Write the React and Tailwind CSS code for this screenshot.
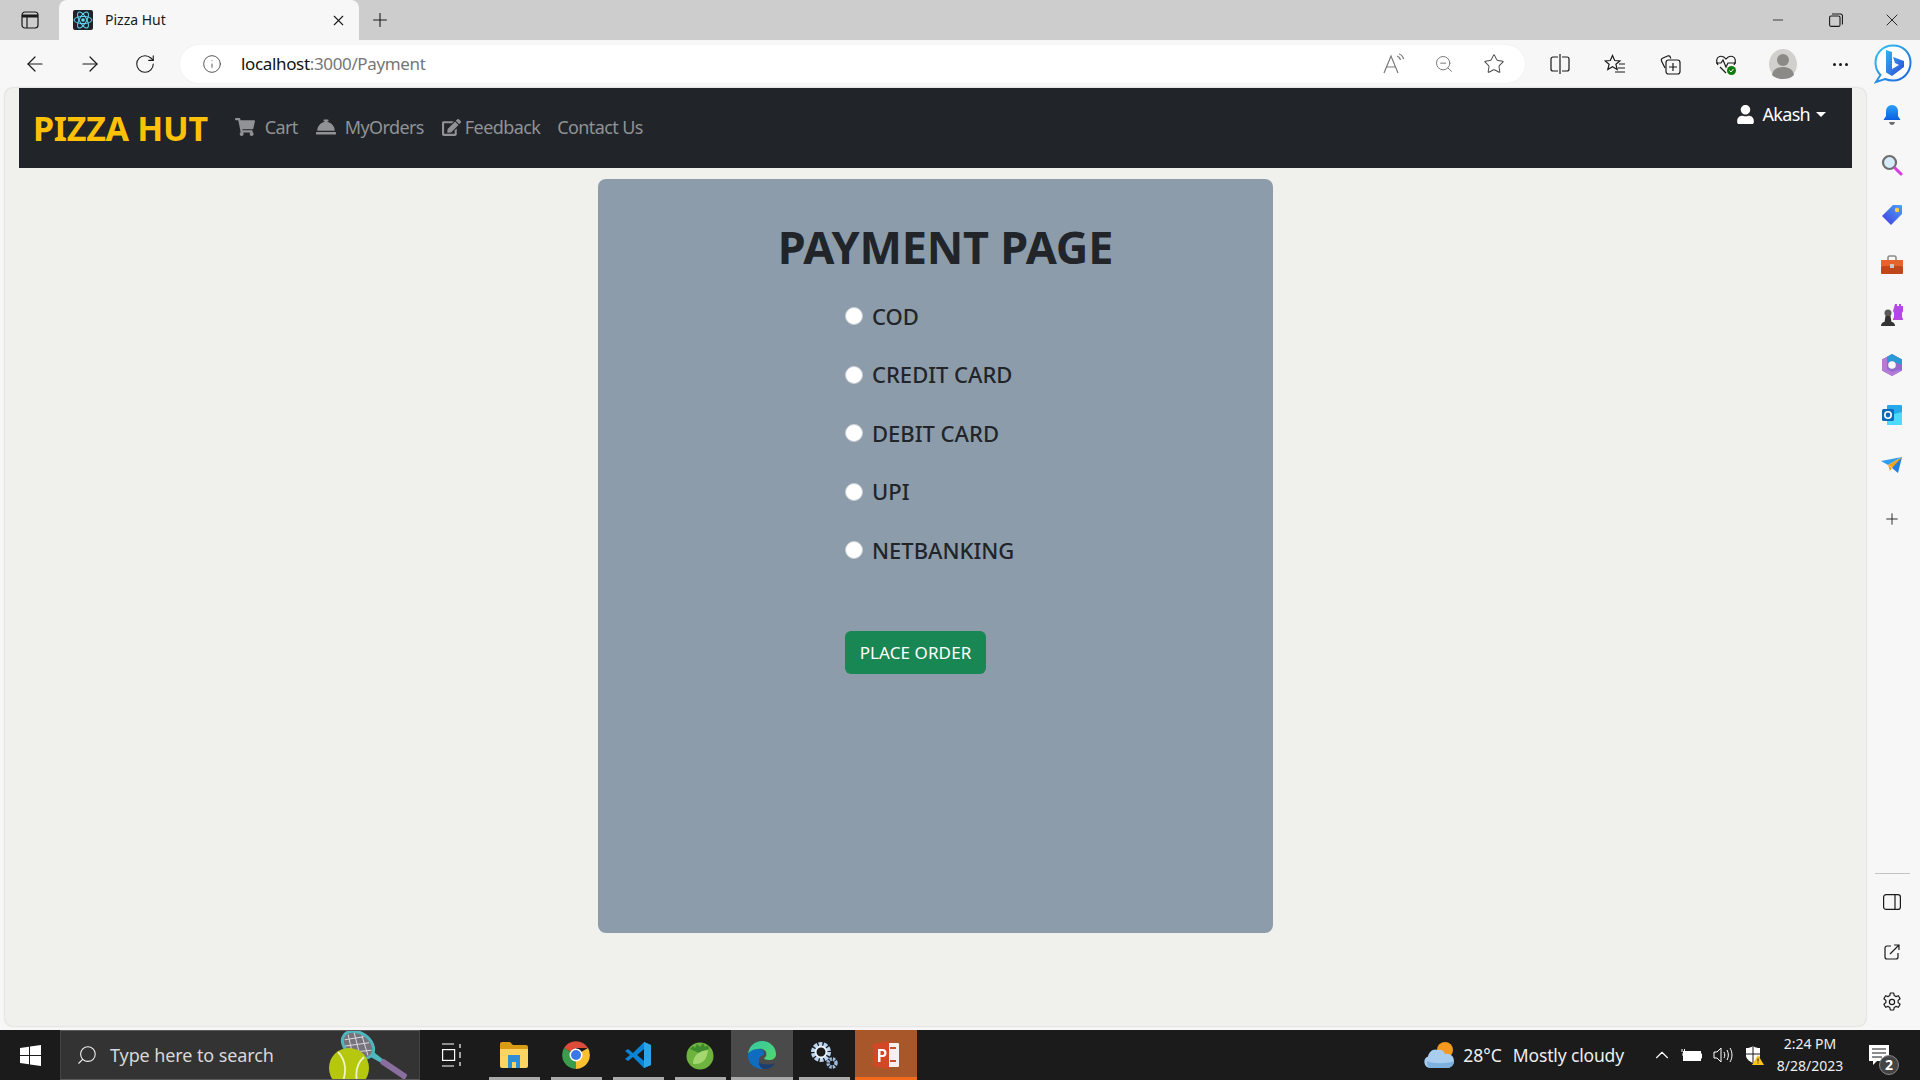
import { ArrowLeft, ArrowRight, RotateCw, Info, ZoomOut, Star, Plus, X, Minus, ChevronUp, Search } from "lucide-react";
import { FaShoppingCart, FaConciergeBell, FaEdit, FaUser } from "react-icons/fa";

const uiFont = { fontFamily: '"Noto Sans", "Open Sans", sans-serif' };

const ToolIcon = ({ width = "w-[45px]", children }) => (
  <div className={`${width} h-full flex items-center justify-center shrink-0`}>{children}</div>
);

const ReactFavicon = () => (
  <svg width="20" height="20" viewBox="0 0 20 20">
    <rect width="20" height="20" rx="2" fill="#20232a" />
    <g fill="none" stroke="#61dafb" strokeWidth="1">
      <ellipse cx="10" cy="10" rx="9" ry="3.6" />
      <ellipse cx="10" cy="10" rx="9" ry="3.6" transform="rotate(60 10 10)" />
      <ellipse cx="10" cy="10" rx="9" ry="3.6" transform="rotate(120 10 10)" />
    </g>
    <circle cx="10" cy="10" r="1.8" fill="#61dafb" />
  </svg>
);

const SideIcon = () => (
  <svg width="18" height="18" viewBox="0 0 18 18" fill="none" stroke="#1a1a1a" strokeWidth="1.2">
    <rect x="1" y="1" width="16" height="16" rx="3" />
    <path d="M1 5h16" strokeWidth="3" />
    <path d="M6 5v12" />
  </svg>
);

const ReadAloud = () => (
  <svg width="24" height="22" viewBox="0 0 24 22" fill="none" stroke="#7a7a7a" strokeWidth="1.2">
    <path d="M2 20 9 3l7 17M4.5 14h9" />
    <path d="M15 3c2 .6 3 2 3.4 4M17 1c2.6.7 4 2.6 4.6 5" />
  </svg>
);

const SplitScreen = () => (
  <svg width="20" height="22" viewBox="0 0 20 22" fill="none" stroke="#1a1a1a" strokeWidth="1.2">
    <path d="M8 4H3a2 2 0 0 0-2 2v10a2 2 0 0 0 2 2h5M12 4h5a2 2 0 0 1 2 2v10a2 2 0 0 1-2 2h-5M10 1v20" />
  </svg>
);

const Favorites = () => (
  <svg width="22" height="22" viewBox="0 0 22 22" fill="none" stroke="#1a1a1a" strokeWidth="1.2">
    <path d="m8.5 2.5 2.2 5 5.2.4-4 3.4 1.3 5.2-4.7-2.8-4.7 2.8 1.3-5.2-4-3.4 5.2-.4z" />
    <path d="M15 11h6M14 15h7M11 19h10" />
  </svg>
);

const Collections = () => (
  <svg width="22" height="22" viewBox="0 0 22 22" fill="none" stroke="#1a1a1a" strokeWidth="1.2">
    <path d="M6 15 2.5 8a2 2 0 0 1 1-2.7l5-2.3a2 2 0 0 1 2.7 1l.6 1.4" />
    <rect x="7" y="7" width="14" height="14" rx="2.5" />
    <path d="M14 10v8M10 14h8" />
  </svg>
);

const HealthHeart = () => (
  <svg width="22" height="24" viewBox="0 0 22 24" fill="none">
    <path d="M3 13C1 10 1 5.5 4.5 4.5 7 3.8 9.5 5 11 7c1.5-2 4-3.2 6.5-2.5C21 5.5 21 10 19 13" stroke="#1a1a1a" strokeWidth="1.2" />
    <path d="M1 11h5l2 -3 3 7 2-4h8M5 15l6 6" stroke="#1a1a1a" strokeWidth="1.2" />
    <circle cx="16.5" cy="18.5" r="4.5" fill="#107c10" />
    <path d="m14.5 18.5 1.5 1.5 2.5-3" stroke="#fff" strokeWidth="1" />
  </svg>
);

const Avatar = () => (
  <svg width="28" height="30" viewBox="0 0 28 30">
    <ellipse cx="14" cy="15" rx="14" ry="15" fill="#d2d0cc" />
    <circle cx="14" cy="11" r="6" fill="#8c8a86" />
    <path d="M3 26c1-6 6-8 11-8s10 2 11 8c-3 3-7 4-11 4s-8-1-11-4z" fill="#8c8a86" />
  </svg>
);

const BingButton = () => (
  <svg width="38" height="40" viewBox="0 0 38 40">
    <defs>
      <linearGradient id="bingRing" x1="0" y1="0" x2="1" y2="1">
        <stop offset="0" stopColor="#36c5f0" />
        <stop offset="1" stopColor="#1b5fe0" />
      </linearGradient>
      <linearGradient id="bingB" x1="0" y1="0" x2="1" y2="1">
        <stop offset="0" stopColor="#2fb4f0" />
        <stop offset="1" stopColor="#2f49d8" />
      </linearGradient>
    </defs>
    <path d="M19 1.5C9 1.5 1.5 9 1.5 18.5c0 5 2 9.5 5 12.5L2 38l9-3c2.5 1 5 1.5 8 1.5 10 0 17.5-8 17.5-18S29 1.5 19 1.5z" fill="#fff" stroke="url(#bingRing)" strokeWidth="2" />
    <path d="M12 6l6 2v17l7-4-4-2-2-6 11 4v6L18 32l-6-3.5z" fill="url(#bingB)" />
  </svg>
);

const Bell = () => (
  <svg width="20" height="22" viewBox="0 0 20 22">
    <defs>
      <linearGradient id="bellFill" x1="0" y1="0" x2="0" y2="1">
        <stop offset="0" stopColor="#29a0f5" />
        <stop offset="1" stopColor="#0a5fe0" />
      </linearGradient>
    </defs>
    <path d="M10 1c-4 0-6 3-6 6.5V12L1.500 16h17L16 12V7.5C16 4 14 1 10 1z" fill="url(#bellFill)" />
    <path d="M7 18h6c-.5 2-1.5 3-3 3s-2.5-1-3-3z" fill="#6b6b70" />
  </svg>
);

const Magnifier = () => (
  <svg width="22" height="22" viewBox="0 0 22 22">
    <circle cx="8.5" cy="8.5" r="6.5" fill="#d6ecfb" stroke="#6e6e6e" strokeWidth="2.2" />
    <path d="m14 14 6 6" stroke="#d63ce0" strokeWidth="3" strokeLinecap="round" />
  </svg>
);

const TagIcon = () => (
  <svg width="22" height="22" viewBox="0 0 22 22">
    <defs>
      <linearGradient id="tagFill" x1="1" y1="0" x2="0" y2="1">
        <stop offset="0" stopColor="#4aa3f5" />
        <stop offset="1" stopColor="#4338e0" />
      </linearGradient>
    </defs>
    <path d="M12 1h8a1 1 0 0 1 1 1v8L10 21 1 12z" fill="url(#tagFill)" />
    <circle cx="16" cy="6" r="2.2" fill="#fbd13c" />
  </svg>
);

const Toolbox = () => (
  <svg width="24" height="20" viewBox="0 0 24 20">
    <path d="M8 6V2.5A1.5 1.5 0 0 1 9.5 1h5A1.5 1.5 0 0 1 16 2.5V6" fill="none" stroke="#8b8b8b" strokeWidth="1.6" />
    <rect x="1" y="5" width="22" height="6" fill="#e8622c" />
    <rect x="1" y="11" width="22" height="8" rx="1" fill="#c1461a" />
    <rect x="10" y="9" width="4" height="4" rx=".5" fill="#c9c9c9" />
  </svg>
);

const Chess = () => (
  <svg width="24" height="24" viewBox="0 0 24 24">
    <path d="M15 1h2v2h2V1h2v2h2v5l-1 2v4l1 2v1H13v-1l1-2v-4l-1-2z" fill="#b546e8" />
    <circle cx="8" cy="10" r="3.5" fill="#5a5a5a" />
    <path d="M5.5 13h5l1 6h-7zM1 23c0-2 1-3.5 3-4h8c2 .5 3 2 3 4z" fill="#333" />
  </svg>
);

const M365 = () => (
  <svg width="22" height="24" viewBox="0 0 22 24">
    <path d="M11 1 21 6.5v11L11 23 1 17.5v-11z" fill="#8f6bd0" />
    <path d="M11 1 21 6.5V12L11 8 5 10V4.5z" fill="#2a9ad6" />
    <path d="M1 6.5 6 4v12l5 3 6-2 4 .5L11 23 1 17.5z" fill="#b47ad6" />
    <circle cx="11" cy="12" r="3.8" fill="#f7f7f7" />
  </svg>
);

const Outlook = () => (
  <svg width="22" height="22" viewBox="0 0 22 22">
    <rect x="6" y="1" width="15" height="20" rx="1" fill="#28a8ea" />
    <path d="M6 12 21 8v12a1 1 0 0 1-1 1H7a1 1 0 0 1-1-1z" fill="#50d9ff" />
    <rect x="1" y="5" width="12" height="12" rx="1.5" fill="#0a6cbd" />
    <circle cx="7" cy="11" r="3.2" fill="none" stroke="#fff" strokeWidth="1.6" />
  </svg>
);

const SendIcon = () => (
  <svg width="22" height="16" viewBox="0 0 22 16">
    <path d="M0 4 21 0 7 8z" fill="#2f9ff0" />
    <path d="M7 8 21 0l-7 12z" fill="#f3a21b" />
    <path d="M21 0 17 16l-6-5z" fill="#1f7fe0" />
    <path d="M7 8l2 6 2-3z" fill="#f3a21b" />
  </svg>
);

const PanelIcon = () => (
  <svg width="18" height="16" viewBox="0 0 18 16" fill="none" stroke="#1a1a1a" strokeWidth="1.2">
    <rect x=".6" y=".6" width="16.8" height="14.8" rx="2.5" />
    <path d="M12 .6v14.8" />
  </svg>
);

const ExternalIcon = () => (
  <svg width="16" height="16" viewBox="0 0 16 16" fill="none" stroke="#1a1a1a" strokeWidth="1.2">
    <path d="M7 2H3a2 2 0 0 0-2 2v9a2 2 0 0 0 2 2h9a2 2 0 0 0 2-2V9" />
    <path d="M6 10 15 1M10 1h5v5" />
  </svg>
);

const GearIcon = () => (
  <svg width="20" height="20" viewBox="0 0 20 20" fill="none" stroke="#1a1a1a" strokeWidth="1.2" strokeLinejoin="round">
    <path d="M8.3 1h3.4l.5 2.6 1.7 1 2.5-.9 1.7 3-2 1.7v2.2l2 1.7-1.7 3-2.5-.9-1.7 1-.5 2.6H8.3l-.5-2.6-1.7-1-2.5.9-1.7-3 2-1.7V8.4l-2-1.7 1.7-3 2.5.9 1.7-1z" />
    <circle cx="10" cy="10" r="2.6" />
  </svg>
);

const WindowsLogo = () => (
  <svg width="21" height="21" viewBox="0 0 21 21" fill="#fff">
    <path d="M0 3 9 1.7V10H0zM10 1.5 21 0v10H10zM0 11h9v8.3L0 18zM10 11h11v10l-11-1.5z" />
  </svg>
);

const TennisArt = () => (
  <svg width="82" height="50" viewBox="0 0 82 50">
    <g transform="translate(29 15) rotate(-56)">
      <ellipse cx="0" cy="0" rx="12" ry="17" fill="#77737c" stroke="#4fb7bd" strokeWidth="3" />
      <path d="M-8 -10 8 8M-10 -2 3 14M-3 -14 10 0M8 -10-8 8M10 -2-3 14M3 -14-10 0" stroke="#d8d8dc" strokeWidth="1" />
      <path d="M-3 17h6l-1 12h-4z" fill="#4fb7bd" />
      <rect x="-3" y="28" width="6" height="30" rx="2" fill="#8a6f9e" />
    </g>
    <circle cx="20" cy="38" r="20" fill="#b5c80d" />
    <path d="M9 22c8 8 9 20 4 32M35 27c-7 6-9 14-7 25" stroke="#eef3c8" strokeWidth="1.8" fill="none" />
  </svg>
);

const TaskViewIcon = () => (
  <svg width="20" height="24" viewBox="0 0 20 24" fill="none" stroke="#fff" strokeWidth="1.2">
    <path d="M0 1h12M0 23h12" />
    <rect x=".6" y="6.6" width="12" height="10.8" />
    <path d="M18 1v4M18 9v6M18 19v4" />
  </svg>
);

const ExplorerIcon = () => (
  <svg width="28" height="26" viewBox="0 0 28 26">
    <path d="M0 2a2 2 0 0 1 2-2h8l3 3h13a2 2 0 0 1 2 2v5H0z" fill="#d99a14" />
    <path d="M0 7h28v17a2 2 0 0 1-2 2H2a2 2 0 0 1-2-2z" fill="#fcd462" />
    <path d="M8 13h12v13h-4v-6h-4v6H8z" fill="#2d8fd6" />
  </svg>
);

const ChromeIcon = () => (
  <svg width="28" height="28" viewBox="0 0 28 28">
    <path d="M14 14 2 7a14 14 0 0 1 24 0H14z" fill="#dd4b39" />
    <path d="M14 14 26 7a14 14 0 0 1-12 21z" fill="#fbc02d" />
    <path d="M14 14 14 28A14 14 0 0 1 2 7z" fill="#3a9c4c" />
    <circle cx="14" cy="14" r="6.5" fill="#fff" />
    <circle cx="14" cy="14" r="5" fill="#3b78e7" />
  </svg>
);

const VscodeIcon = () => (
  <svg width="28" height="28" viewBox="0 0 28 28">
    <path d="M20 1 27 4v20l-7 3L9 16l-5 4-3-2 5-4-5-4 3-2 5 4z" fill="#0a84d6" />
    <path d="M20 1 27 4v20l-7 3zM20 8l-7 6 7 6z" fill="#2aa5ec" />
    <path d="M20 8 13 14l7 6z" fill="#1b1b1b" />
  </svg>
);

const SpringIcon = () => (
  <svg width="30" height="30" viewBox="0 0 30 30">
    <circle cx="15" cy="16" r="13.5" fill="#6fb33f" />
    <path d="M5 9l3-3 2 2 2-4 3 3 3-4 2 4 3-2 1 4-10 4z" fill="#3f8a2c" />
    <path d="M8 24c0-9 6-13 15-14-1 9-5 15-15 14z" fill="#a4d770" />
  </svg>
);

const EdgeIcon = () => (
  <svg width="30" height="30" viewBox="0 0 30 30">
    <defs>
      <linearGradient id="edgeTop" x1="0" y1="0" x2="1" y2="1">
        <stop offset="0" stopColor="#34c8a6" />
        <stop offset="1" stopColor="#52d86a" />
      </linearGradient>
    </defs>
    <path d="M1 14C2 6 8 1 15 1c8 0 14 6 14 13 0 4-3 6-7 6-3 0-5-1-5-2 2-1 3-3 2-6-1-2-4-4-8-3-5 1-9 3-10 5z" fill="url(#edgeTop)" />
    <path d="M1 14c1-2 5-5 10-5 4 0 7 2 6 6-3 0-6 3-5 8 0 3 2 5 5 6-9 1-17-6-16-15z" fill="#0f6cc0" />
    <path d="M12 23c0 3 2 5 5 6 5 0 9-2 11-6-4 2-10 2-16 0z" fill="#1b3f70" />
  </svg>
);

const SettingsGears = () => (
  <svg width="30" height="30" viewBox="0 0 30 30">
    <circle cx="12" cy="12" r="7.5" fill="none" stroke="#bcd4ee" strokeWidth="5" strokeDasharray="3.5 1.2" />
    <circle cx="12" cy="12" r="5.5" fill="none" stroke="#e8f0fa" strokeWidth="2" />
    <circle cx="23" cy="23" r="4" fill="none" stroke="#9ab9dc" strokeWidth="3.5" strokeDasharray="2.2 1" />
  </svg>
);

const PowerPointIcon = () => (
  <svg width="26" height="28" viewBox="0 0 26 28">
    <rect x="7" y="2" width="19" height="24" rx="1" fill="#f6f1ee" />
    <path d="M17 6h6v2h-6zM17 19h6v2h-6z" fill="#c8502a" />
    <path d="M0 3 16 0v28L0 25z" fill="#d24726" />
    <path d="M5 8h4.5a3.2 3.2 0 0 1 0 8H7.500v5H5zM7.5 10v4h1.800a2 2 0 0 0 0-4z" fill="#fff" />
  </svg>
);

const CloudIcon = () => (
  <svg width="32" height="28" viewBox="0 0 32 28">
    <circle cx="22" cy="9" r="8" fill="#f39a1e" />
    <path d="M7 27a6 6 0 0 1-2-11.5C6 10 11 7 15 9c2-1 6 0 7 4 5-1 9 2 9 7 0 4-3 7-7 7z" fill="#a9cdee" />
    <path d="M4 20c5 3 20 3 27 0 0 4-3 7-7 7H7c-2 0-3-3-3-7z" fill="#7fb1e0" />
  </svg>
);

const BatteryIcon = () => (
  <svg width="21" height="14" viewBox="0 0 21 14" fill="none" stroke="#fff">
    <path d="M1 1v3M3.5 1v3M2 5v3" />
    <rect x="2.5" y="3.5" width="17" height="9" fill="#fff" />
    <rect x="19.5" y="6" width="1.5" height="4" fill="#fff" />
  </svg>
);

const VolumeIcon = () => (
  <svg width="20" height="16" viewBox="0 0 20 16" fill="none" stroke="#fff">
    <path d="M1 5h3l4-4v14l-4-4H1zM11 5c1 2 1 4 0 6M14 3c1.8 3 1.8 7 0 10M17 1c2.6 4 2.6 10 0 14" />
  </svg>
);

const ShieldIcon = () => (
  <svg width="20" height="20" viewBox="0 0 20 20">
    <path d="M9 1c2 1.5 4 2 7 2v7c0 4-3 6-7 8-4-2-7-4-7-8V3c3 0 5-.5 7-2z" fill="#fff" />
    <path d="M9 1v17M2 9h14" stroke="#1b1b1b" strokeWidth="1" />
    <path d="M14 10l6 10H8z" fill="#fcc419" />
    <path d="M14 13.5v3M14 17.5v1" stroke="#1b1b1b" />
  </svg>
);

const NoticeIcon = () => (
  <div className="relative">
    <svg width="20" height="20" viewBox="0 0 20 20">
      <path d="M0 0h20v16H8l-4 4v-4H0z" fill="#fff" />
      <path d="M3 4h14M3 8h14M3 12h10" stroke="#1b1b1b" />
    </svg>
    <span className="absolute left-[10px] top-[10px] w-[20px] h-[20px] rounded-full bg-[#444] border border-[#888] flex items-center justify-center text-white text-[14px] font-bold leading-none">
      2
    </span>
  </div>
);

const navLinks = [
  { label: "Cart", icon: <FaShoppingCart size={20} />, left: "ml-[27px]", gap: "gap-[10px]" },
  { label: "MyOrders", icon: <FaConciergeBell size={20} />, left: "ml-[18px]", gap: "gap-[9px]" },
  { label: "Feedback", icon: <FaEdit size={19} />, left: "ml-[18px]", gap: "gap-[4px]" },
  { label: "Contact Us", icon: null, left: "ml-[17px]", gap: "" },
];

const paymentOptions = ["COD", "CREDIT CARD", "DEBIT CARD", "UPI", "NETBANKING"];

const taskApps = [
  { icon: <ExplorerIcon /> },
  { icon: <ChromeIcon /> },
  { icon: <VscodeIcon /> },
  { icon: <SpringIcon /> },
  { icon: <EdgeIcon />, bg: "bg-[#4a4a4a]", bar: "w-full bg-[#aaaaaa]" },
  { icon: <SettingsGears /> },
  { icon: <PowerPointIcon />, bg: "bg-[#a8572a]", bar: "w-full bg-[#f26b1d]" },
];

const sidebarIcons = [<Bell />, <Magnifier />, <TagIcon />, <Toolbox />, <Chess />, <M365 />, <Outlook />, <SendIcon />];

const App = () => {
  return (
    <div className="h-screen w-full flex flex-col overflow-hidden bg-[#f7f7f7]" style={uiFont}>
      {/* Tab strip */}
      <div className="h-[40px] bg-[#cdcdcd] flex items-stretch shrink-0">
        <div className="w-[59px] flex items-center justify-center">
          <SideIcon />
        </div>
        <div className="w-[300px] bg-[#f7f7f7] rounded-t-[8px] flex items-center pl-[14px] pr-[12px]">
          <ReactFavicon />
          <span className="ml-[12px] -mt-[2px] text-[14px] text-[#1a1a1a]">Pizza Hut</span>
          <X className="ml-auto" size={17} strokeWidth={1.5} color="#1a1a1a" />
        </div>
        <div className="ml-[10px] flex items-center">
          <Plus size={22} strokeWidth={1.2} color="#1a1a1a" />
        </div>
        <div className="ml-auto flex items-center text-[#1a1a1a]">
          <ToolIcon width="w-[58px]"><Minus size={16} strokeWidth={1.2} /></ToolIcon>
          <ToolIcon width="w-[57px]">
            <svg width="14" height="14" viewBox="0 0 14 14" fill="none" stroke="#1a1a1a" strokeWidth="1.1">
              <rect x=".6" y="3" width="10.4" height="10.4" rx="1.5" />
              <path d="M3 1h8.5A1.8 1.8 0 0 1 13.4 3v8.5" />
            </svg>
          </ToolIcon>
          <ToolIcon width="w-[56px]"><X size={20} strokeWidth={1.1} /></ToolIcon>
        </div>
      </div>

      {/* Toolbar */}
      <div className="h-[48px] flex items-center shrink-0 pl-[7px]">
        <div className="flex h-[38px] items-center w-[173px]">
          <ToolIcon width="w-[55px]"><ArrowLeft size={24} strokeWidth={1.2} color="#1a1a1a" /></ToolIcon>
          <ToolIcon width="w-[55px]"><ArrowRight size={24} strokeWidth={1.2} color="#1a1a1a" /></ToolIcon>
          <ToolIcon width="w-[55px]"><RotateCw size={22} strokeWidth={1.2} color="#1a1a1a" /></ToolIcon>
        </div>
        <div className="w-[1345px] h-[38px] bg-white rounded-full flex items-center pl-[22px] pr-[6px] shadow-[0_0_2px_rgba(0,0,0,0.06)]">
          <Info size={20} strokeWidth={1.1} color="#4a4a4a" />
          <span className="ml-[19px] text-[17px] tracking-[-0.35px]">
            <span className="text-[#111]">localhost</span>
            <span className="text-[#767676]">:3000/Payment</span>
          </span>
          <div className="ml-auto flex items-center h-full">
            <ToolIcon width="w-[50px]"><ReadAloud /></ToolIcon>
            <ToolIcon width="w-[50px]"><ZoomOut size={20} strokeWidth={1.2} color="#7a7a7a" /></ToolIcon>
            <ToolIcon width="w-[50px]"><Star size={22} strokeWidth={1.1} color="#4a4a4a" /></ToolIcon>
          </div>
        </div>
        <div className="ml-[7px] flex items-center h-[38px]">
          <ToolIcon width="w-[55px]"><SplitScreen /></ToolIcon>
          <ToolIcon width="w-[55px]"><Favorites /></ToolIcon>
          <ToolIcon width="w-[56px]"><Collections /></ToolIcon>
          <ToolIcon width="w-[55px]"><HealthHeart /></ToolIcon>
          <ToolIcon width="w-[60px]"><Avatar /></ToolIcon>
          <ToolIcon width="w-[55px]">
            <div className="flex gap-[3px]">
              <span className="w-[3px] h-[3px] rounded-full bg-[#1a1a1a]" />
              <span className="w-[3px] h-[3px] rounded-full bg-[#1a1a1a]" />
              <span className="w-[3px] h-[3px] rounded-full bg-[#1a1a1a]" />
            </div>
          </ToolIcon>
          <ToolIcon width="w-[49px]"><BingButton /></ToolIcon>
        </div>
      </div>

      {/* Page + edge sidebar */}
      <div className="flex-1 min-h-0 flex pl-[5px] pb-[4px]">
        <div className="w-[1861px] h-full bg-[#f0f1ec] rounded-[8px] shadow-[0_0_2px_rgba(0,0,0,0.25)] flex flex-col items-center overflow-hidden">
          <nav className="w-[1833px] h-[80px] shrink-0 bg-[#212529] flex pl-[14px] pr-[26px]">
            <a className="self-center text-[34px] font-bold text-[#ffc107] tracking-[-0.3px] leading-none">PIZZA HUT</a>
            <div className="flex items-center -mt-[2px]">
              {navLinks.map((link) => (
                <div key={link.label} className={`flex items-center ${link.left} ${link.gap} text-[18px] tracking-[-0.6px] text-[#909295]`}>
                  {link.icon}
                  <span>{link.label}</span>
                </div>
              ))}
            </div>
            <div className="ml-auto mt-[12px] h-[28px] flex items-center text-white text-[18px] tracking-[-0.7px]">
              <FaUser size={19} />
              <span className="ml-[8px]">Akash</span>
              <span className="ml-[6px] w-0 h-0 border-x-[5px] border-x-transparent border-t-[5px] border-t-white" />
            </div>
          </nav>

          <div className="mt-[11px] w-[675px] h-[754px] shrink-0 bg-[#8d9cab] rounded-[8px] flex flex-col">
            <h1 className="mt-[38px] pl-[20px] text-center text-[45px] leading-[60px] font-bold text-[#212529] tracking-[-0.2px]">
              PAYMENT PAGE
            </h1>
            <div className="ml-[247px] mt-[25px] flex flex-col gap-[28.5px]">
              {paymentOptions.map((option) => (
                <label key={option} className="flex items-center h-[30px] text-[22px] font-medium text-[#212529]">
                  <span className="w-[18px] h-[18px] rounded-full bg-white border border-[#c9ced3] -mt-[2px]" />
                  <span className="ml-[9px] -mt-[2px]">{option}</span>
                </label>
              ))}
            </div>
            <button className="ml-[247px] mt-[65px] w-[141px] h-[43px] rounded-[6px] bg-[#198754] text-white text-[17px] tracking-[0.1px]">
              PLACE ORDER
            </button>
          </div>
        </div>

        <div className="w-[54px] h-full flex flex-col items-center pr-[2px]">
          <div className="h-[2px]" />
          {sidebarIcons.map((icon, i) => (
            <div key={i} className="h-[50px] w-full flex items-center justify-center">
              {icon}
            </div>
          ))}
          <div className="h-[58px] w-full flex items-center justify-center">
            <Plus size={18} strokeWidth={1.2} color="#1a1a1a" />
          </div>
          <div className="mt-auto -mb-[1px] w-full flex flex-col items-center">
            <div className="w-[35px] h-px bg-[#c4c4c4] mb-[3px]" />
            <div className="h-[50px] flex items-center"><PanelIcon /></div>
            <div className="h-[50px] flex items-center"><ExternalIcon /></div>
            <div className="h-[50px] flex items-center"><GearIcon /></div>
          </div>
        </div>
      </div>

      {/* Windows taskbar */}
      <div className="h-[50px] shrink-0 bg-[#1b1b1b] flex items-stretch text-white">
        <div className="w-[60px] flex items-center justify-center"><WindowsLogo /></div>
        <div className="w-[360px] bg-[#333333] border-y border-[#5a5a5a] border-x border-x-[#444] flex items-center pl-[15px] overflow-hidden">
          <Search size={22} strokeWidth={1.2} className="-scale-x-100 text-[#eeeeee]" />
          <span className="ml-[12px] text-[18px] text-[#d8d8d8] tracking-[-0.1px]">Type here to search</span>
          <div className="ml-auto mr-[8px]"><TennisArt /></div>
        </div>
        <div className="w-[63px] flex items-center justify-center"><TaskViewIcon /></div>
        {taskApps.map((app, i) => (
          <div key={i} className={`w-[62px] flex flex-col items-center ${app.bg || ""}`}>
            <div className="flex-1 flex items-center justify-center pt-[3px]">{app.icon}</div>
            <div className={`h-[3px] ${app.bar || "w-[51px] bg-[#aaaaaa]"}`} />
          </div>
        ))}
        <div className="ml-auto flex items-center pr-[21px]">
          <CloudIcon />
          <span className="ml-[8px] text-[17.5px] text-[#eeeeee]">28°C</span>
          <span className="ml-[11px] text-[17.5px] text-[#eeeeee] tracking-[-0.15px]">Mostly cloudy</span>
          <ChevronUp className="ml-[27px]" size={22} strokeWidth={1.2} />
          <div className="ml-[8px]"><BatteryIcon /></div>
          <div className="ml-[11px]"><VolumeIcon /></div>
          <div className="ml-[11px]"><ShieldIcon /></div>
          <div className="ml-[6px] w-[80px] flex flex-col items-center text-[14px] leading-[22px] text-[#eeeeee]">
            <span>2:24 PM</span>
            <span>8/28/2023</span>
          </div>
          <div className="ml-[19px] w-[30px]"><NoticeIcon /></div>
        </div>
      </div>
    </div>
  );
};

export default App;
